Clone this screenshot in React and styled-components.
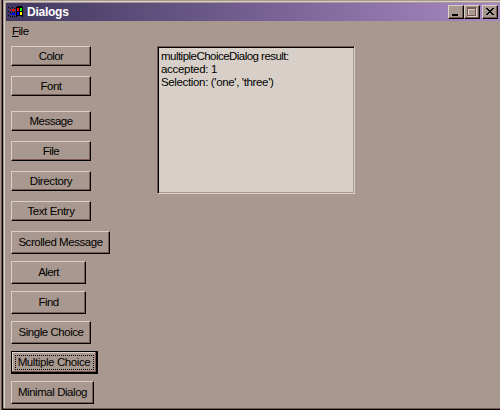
import React from 'react';
import styled, { createGlobalStyle } from 'styled-components';

const c = { face: '#a8988f', light: '#d8d0c8', shade: '#785850', ink: '#000' };

const Global = createGlobalStyle`
  *, *::before, *::after { box-sizing: border-box; }
  body { margin: 0; background: ${c.face}; overflow: hidden; }
`;

const Desktop = styled.div`
  display: flex;
  width: 500px;
  height: 410px;
  background: ${c.face};
  font: 11.5px/13px "Liberation Sans", Arial, sans-serif;
  color: ${c.ink};
`;

const Edge = styled.div`
  flex: none;
  width: 3px;
  background: linear-gradient(to right, ${c.face} 0 1px, ${c.shade} 1px 2px, ${c.ink} 2px 3px);
`;

const Window = styled.main`
  display: flex;
  flex-direction: column;
  flex: 1;
  min-width: 0;
  height: 410px;
  padding: 3px 0 0 3px;
  border-bottom: 1px solid ${c.ink};
  box-shadow: inset 0 -1px ${c.shade};
  background:
    linear-gradient(${c.light}, ${c.light}) 1px 1px / 100% 1px no-repeat,
    linear-gradient(${c.light}, ${c.light}) 1px 1px / 1px 100% no-repeat,
    ${c.face};
`;

const TitleBar = styled.header`
  display: flex;
  align-items: center;
  flex: none;
  height: 18px;
  padding: 0 2px;
  background: linear-gradient(to right, #403860, #a888c0);
`;

const Title = styled.h1`
  flex: 1;
  margin: 0 0 0 3px;
  font-size: 12px;
  line-height: 18px;
  letter-spacing: -0.25px;
  color: #fff;
`;

const Controls = styled.div`
  display: flex;
`;

const Control = styled.button`
  width: 16px;
  height: 14px;
  padding: 0;
  margin-left: ${p => p.$gap || 0}px;
  border: solid;
  border-width: 1px;
  border-color: ${c.light} ${c.ink} ${c.ink} ${c.light};
  box-shadow: inset -1px -1px ${c.shade};
  background: ${c.face};
  svg { display: block; }
`;

const Menu = styled.nav`
  flex: none;
  height: 25px;
  padding: 4px 6px;
  letter-spacing: -0.5px;
`;

const Content = styled.section`
  display: grid;
  grid-template-columns: 146px 198px;
  align-items: start;
  padding-left: 5px;
`;

const Stack = styled.div`
  display: flex;
  flex-direction: column;
  align-items: flex-start;
`;

const PushButton = styled.button`
  display: flex;
  align-items: center;
  justify-content: center;
  flex: none;
  width: ${p => p.$w}px;
  height: ${p => p.$h}px;
  margin-bottom: ${p => p.$after}px;
  padding: 0;
  border: solid;
  border-width: ${p => (p.$focused ? '1px 2px 2px 1px' : '1px')};
  border-color: ${p => (p.$focused ? c.ink : `${c.light} ${c.ink} ${c.ink} ${c.light}`)};
  box-shadow: inset -1px -1px ${c.shade}${p => (p.$focused ? `, inset 1px 1px ${c.light}` : '')};
  background: ${c.face};
  color: ${c.ink};
  font: inherit;
  letter-spacing: ${p => p.$ls}px;
  white-space: nowrap;
`;

const FocusRing = styled.span`
  display: flex;
  align-items: center;
  justify-content: center;
  width: 79px;
  height: 15px;
  border: 1px dotted ${c.ink};
`;

const Result = styled.pre`
  width: 198px;
  height: 148px;
  margin: 0;
  padding: 3px;
  border: solid;
  border-width: 1px;
  border-color: ${c.shade} ${c.light} ${c.light} ${c.shade};
  box-shadow: inset 1px 1px ${c.ink}, inset -1px -1px ${c.face};
  background: ${c.light};
  font: inherit;
`;

const Line = styled.span`
  display: block;
  letter-spacing: ${p => p.$ls}px;
`;

const buttons = [
  { label: 'Color', w: 80, h: 20, after: 10, ls: -0.6 },
  { label: 'Font', w: 80, h: 20, after: 15, ls: -0.5 },
  { label: 'Message', w: 80, h: 20, after: 10, ls: -0.5 },
  { label: 'File', w: 80, h: 20, after: 10, ls: -0.5 },
  { label: 'Directory', w: 80, h: 20, after: 10, ls: -0.4 },
  { label: 'Text Entry', w: 80, h: 20, after: 10, ls: -0.4 },
  { label: 'Scrolled Message', w: 99, h: 23, after: 7, ls: -0.45 },
  { label: 'Alert', w: 75, h: 23, after: 7, ls: -0.6 },
  { label: 'Find', w: 75, h: 23, after: 7, ls: -0.6 },
  { label: 'Single Choice', w: 80, h: 23, after: 7, ls: -0.45 },
  { label: 'Multiple Choice', w: 87, h: 23, after: 7, ls: -0.4, focused: true },
  { label: 'Minimal Dialog', w: 83, h: 23, after: 0, ls: -0.45 },
];

const WindowsLogo = () => (
  <svg width="16" height="16" viewBox="0 0 16 16" shapeRendering="crispEdges">
    <path fill="#000" d="M8 3h1V2h5v1h1v10h-1v-1H9v1H8z" />
    <path fill="#000" d="M0 3h1v1H0zM2 4h1v1H2zM4 3h1v1H4zM6 4h1v1H6zM0 7h1v1H0zM2 8h1v1H2zM4 8h1v1H4zM6 8h1v1H6zM0 11h1v1H0zM2 12h1v1H2zM4 12h1v1H4zM6 12h1v1H6z" />
    <path fill="#f00" d="M9 4h2v3H9zM4 5h3v2H4zM2 5h1v2H2z" />
    <path fill="#0f0" d="M12 4h2v3h-2z" />
    <path fill="#00f" d="M9 8h2v3H9zM4 9h3v2H4zM2 9h1v2H2z" />
    <path fill="#ff0" d="M12 8h2v3h-2z" />
  </svg>
);

export default function App() {
  return (
    <>
      <Global />
      <Desktop>
        <Edge />
        <Window>
          <TitleBar>
            <WindowsLogo />
            <Title>Dialogs</Title>
            <Controls>
              <Control aria-label="Minimize">
                <svg width="14" height="12" shapeRendering="crispEdges"><path d="M3 8h6v2H3z" /></svg>
              </Control>
              <Control aria-label="Maximize">
                <svg width="14" height="12" shapeRendering="crispEdges">
                  <path d="M3 2h9v9H3z" fill={c.light} />
                  <path d="M2 1h9v9H2z" fill={c.shade} />
                  <path d="M3 3h7v6H3z" fill={c.light} />
                  <path d="M4 4h6v5H4z" fill={c.face} />
                </svg>
              </Control>
              <Control aria-label="Close" $gap={2}>
                <svg width="14" height="12" shapeRendering="crispEdges">
                  <path d="M3 2h2v1h1v1h2V3h1V2h2v1h-1v1H9v1H8v1h1v1h1v1h1v1H9V8H8V7H6v1H5v1H3V8h1V7h1V6h1V5H5V4H4V3H3z" />
                </svg>
              </Control>
            </Controls>
          </TitleBar>
          <Menu><u>F</u>ile</Menu>
          <Content>
            <Stack>
              {buttons.map(b => (
                <PushButton key={b.label} $w={b.w} $h={b.h} $after={b.after} $ls={b.ls} $focused={b.focused}>
                  {b.focused ? <FocusRing>{b.label}</FocusRing> : b.label}
                </PushButton>
              ))}
            </Stack>
            <Result>
              <Line $ls={-0.53}>multipleChoiceDialog result:</Line>
              <Line $ls={-0.3}>accepted: 1</Line>
              <Line $ls={-0.35}>Selection: ('one', 'three')</Line>
            </Result>
          </Content>
        </Window>
      </Desktop>
    </>
  );
}
